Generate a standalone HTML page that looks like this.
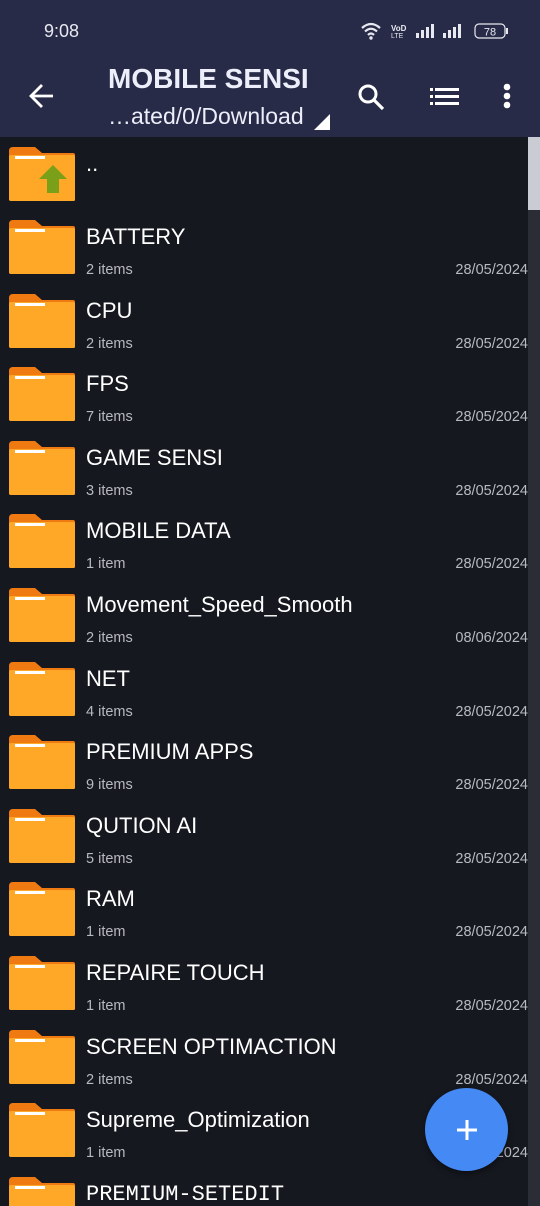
<!DOCTYPE html>
<html><head><meta charset="utf-8"><style>
*{margin:0;padding:0;box-sizing:border-box}
html{width:540px;height:1206px;overflow:hidden}
body{width:540px;height:1206px;overflow:hidden;background:#15181f;font-family:"Liberation Sans",Roboto,sans-serif;color:#fff;position:relative}
.hdr{position:absolute;left:0;top:0;width:540px;height:137px;background:#272b47}
.t{position:absolute}
.row{position:absolute;left:0;width:528px;height:74px}
.fold{position:absolute;left:9px;top:0;width:66px;height:54px}
.nm{position:absolute;left:86px;top:4px;font-size:22px;color:#fff;white-space:nowrap}
.it{position:absolute;left:86px;top:42px;font-size:14.5px;color:#b8bac0}
.dt{position:absolute;right:0;top:42px;font-size:14.5px;color:#b8bac0}
</style></head><body>
<div class="hdr"></div>
<div class="t" style="left:44px;top:21px;font-size:18px;color:#e8e9f0">9:08</div>
<svg class="t" style="left:360px;top:20px" width="160" height="24" viewBox="0 0 160 24">
<path d="M2 8 Q11 0 20 8" stroke="#e8e9f0" stroke-width="2.2" fill="none"/><path d="M5 11.5 Q11 6 17 11.5" stroke="#e8e9f0" stroke-width="2.2" fill="none"/><path d="M8 15 Q11 12 14 15" stroke="#e8e9f0" stroke-width="2.2" fill="none"/><circle cx="11" cy="18" r="1.7" fill="#e8e9f0"/>
<text x="31" y="11" font-size="8" fill="#e8e9f0" font-family="Liberation Sans" font-weight="bold">VoD</text><text x="31" y="18" font-size="7" fill="#e8e9f0" font-family="Liberation Sans">LTE</text>
<rect x="56" y="13" width="3" height="5" fill="#e8e9f0"/><rect x="61" y="10" width="3" height="8" fill="#e8e9f0"/><rect x="66" y="7" width="3" height="11" fill="#e8e9f0"/><rect x="71" y="4" width="3" height="14" fill="#e8e9f0"/>
<rect x="83" y="13" width="3" height="5" fill="#e8e9f0"/><rect x="88" y="10" width="3" height="8" fill="#e8e9f0"/><rect x="93" y="7" width="3" height="11" fill="#e8e9f0"/><rect x="98" y="4" width="3" height="14" fill="#e8e9f0"/>
<rect x="115" y="4" width="30" height="14" rx="4" stroke="#e8e9f0" stroke-width="1.2" fill="none"/><rect x="146" y="8" width="2" height="6" fill="#e8e9f0"/>
<text x="130" y="15.5" font-size="11" fill="#e8e9f0" text-anchor="middle" font-family="Liberation Sans">78</text></svg>
<svg class="t" style="left:28px;top:82px" width="28" height="28" viewBox="0 0 28 28"><path d="M25 14H4M14 3L3 14l11 11" stroke="#fff" stroke-width="2.8" fill="none"/></svg>
<div class="t" style="left:108px;top:63px;font-size:28px;font-weight:bold;color:#eceefa">MOBILE SENSI</div>
<div class="t" style="left:108px;top:103px;font-size:23px;color:#eceefa">…ated/0/Download</div>
<svg class="t" style="left:314px;top:114px" width="16" height="16"><path d="M16 0V16H0Z" fill="#fff"/></svg>
<svg class="t" style="left:356px;top:82px" width="30" height="30" viewBox="0 0 30 30"><circle cx="12" cy="12" r="8" stroke="#fff" stroke-width="3" fill="none"/><path d="M18 18l9 9" stroke="#fff" stroke-width="3.2"/></svg>
<svg class="t" style="left:430px;top:87px" width="30" height="20" viewBox="0 0 30 20"><g fill="#fff"><rect x="0" y="1" width="3" height="3"/><rect x="5" y="1" width="24" height="3"/><rect x="0" y="8" width="3" height="3"/><rect x="5" y="8" width="24" height="3"/><rect x="0" y="15" width="3" height="3"/><rect x="5" y="15" width="24" height="3"/></g></svg>
<svg class="t" style="left:500px;top:82px" width="14" height="28"><circle cx="7" cy="5" r="3.3" fill="#fff"/><circle cx="7" cy="14" r="3.3" fill="#fff"/><circle cx="7" cy="23" r="3.3" fill="#fff"/></svg>
<div class="t" style="left:528px;top:137px;width:12px;height:1069px;background:#2a2d35"></div>
<div class="t" style="left:528px;top:137px;width:12px;height:73px;background:#c9ccd2"></div>

<div class="row" style="top:147px">
<svg class="fold" viewBox="0 0 66 54"><path d="M0 4Q0 0 4 0H26L33 6H64Q66 6 66 8V53Q66 54 64 54H2Q0 54 0 52Z" fill="#f07a12"/><path d="M0 10Q0 8 2 8H64Q66 8 66 10V52Q66 54 64 54H2Q0 54 0 52Z" fill="#ffa726"/><rect x="6" y="9" width="30" height="3" fill="#fff"/><path d="M44 18L58 32H50V46H38V32H30Z" fill="#7aa01a"/></svg>
<div class="nm" style="top:4px">..</div></div>

<div id="list"></div>
<script>
var d=[["BATTERY","2 items","28/05/2024"],["CPU","2 items","28/05/2024"],["FPS","7 items","28/05/2024"],["GAME SENSI","3 items","28/05/2024"],["MOBILE DATA","1 item","28/05/2024"],["Movement_Speed_Smooth","2 items","08/06/2024"],["NET","4 items","28/05/2024"],["PREMIUM APPS","9 items","28/05/2024"],["QUTION AI","5 items","28/05/2024"],["RAM","1 item","28/05/2024"],["REPAIRE TOUCH","1 item","28/05/2024"],["SCREEN OPTIMACTION","2 items","28/05/2024"],["Supreme_Optimization","1 item","28/05/2024"],["PREMIUM-SETEDIT","",""]];
var h="";for(var i=0;i<d.length;i++){var yy=220+73.6*i;
h+='<div class="row" style="top:'+yy+'px"><svg class="fold" viewBox="0 0 66 54"><path d="M0 4Q0 0 4 0H26L33 6H64Q66 6 66 8V53Q66 54 64 54H2Q0 54 0 52Z" fill="#f07a12"/><path d="M0 10Q0 8 2 8H64Q66 8 66 10V52Q66 54 64 54H2Q0 54 0 52Z" fill="#ffa726"/><rect x="6" y="9" width="30" height="3" fill="#fff"/></svg><div class="nm"'+(i==13?' style="font-family:\'Liberation Mono\',monospace;font-size:22px;top:5px"':'')+'>'+d[i][0]+'</div><div class="it">'+d[i][1]+'</div><div class="dt">'+d[i][2]+'</div></div>';}
document.getElementById("list").innerHTML=h;
</script>
<div class="t" style="left:425px;top:1088px;width:83px;height:83px;border-radius:50%;background:#4589f5;box-shadow:0 3px 6px rgba(0,0,0,.4)"></div>
<svg class="t" style="left:455px;top:1118px" width="24" height="24"><path d="M12 2V22M2 12H22" stroke="#fff" stroke-width="3"/></svg>
</body></html>
